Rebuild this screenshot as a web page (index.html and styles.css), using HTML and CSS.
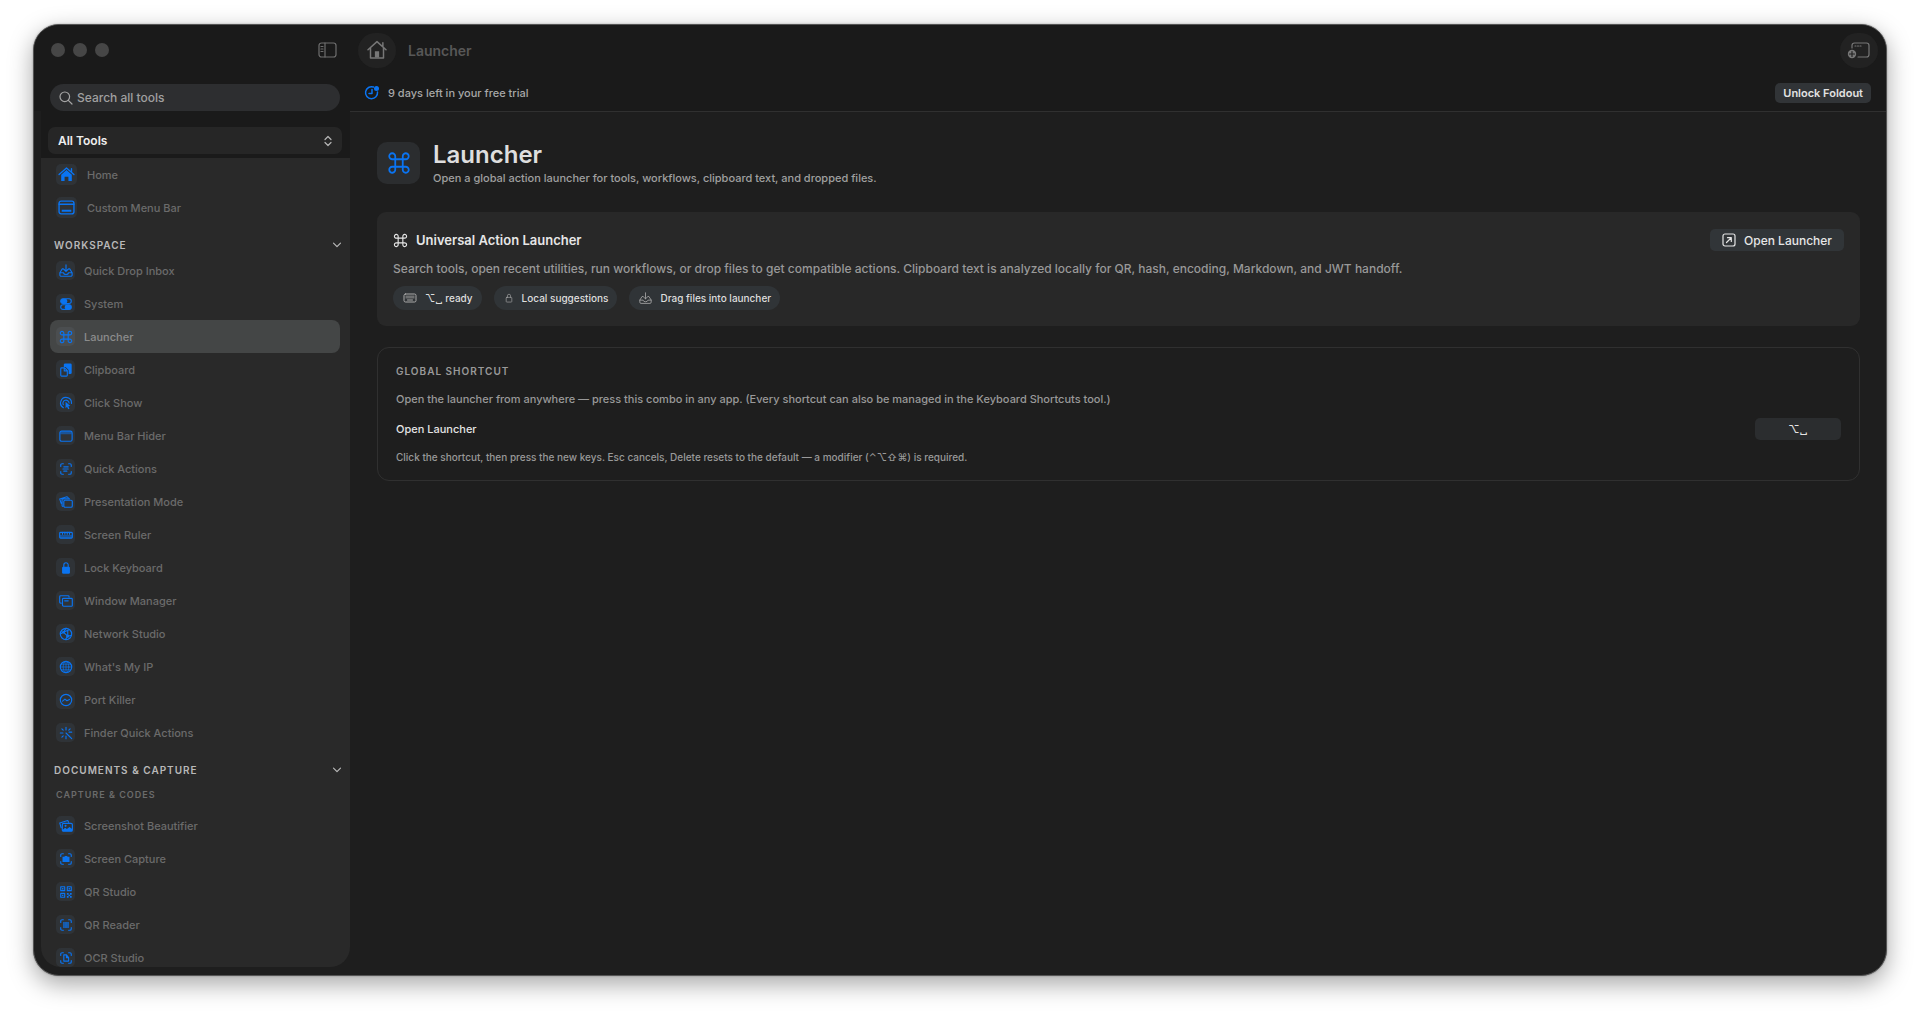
FILE: index.html
```html
<!DOCTYPE html>
<html lang="en">
<head>
    <meta charset="UTF-8">
    <meta name="viewport" content="width=device-width, initial-scale=1.0">
    <title>Launcher</title>
    <link rel="stylesheet" href="styles.css">
</head>
<body>

<!-- icon sprite -->
<svg class="sprite" aria-hidden="true">
    <symbol id="command" viewBox="0 0 16 16"><path d="M5.5 5.5h5v5h-5zM5.5 5.5H3.7a2 2 0 1 1 1.8-2zM10.5 5.5V3.7a2 2 0 1 1 2 1.8zM10.5 10.5h1.8a2 2 0 1 1-1.8 2zM5.5 10.5v1.8a2 2 0 1 1-2-1.8z"/></symbol>
    <symbol id="house-fill" viewBox="0 0 16 16"><path d="M1 8l7-6.2L15 8M12.7 2.5v3"/><path class="solid" d="M3 8.2l5-4.4 5 4.4V14H9.8v-4H6.2v4H3z"/></symbol>
    <symbol id="house" viewBox="0 0 16 16"><path d="M.8 7.8L8 1.3l7.2 6.5M2.8 6.5v7.8h10.4V6.5M12.7 2.2v3"/><path class="solid" d="M6.3 9h3.4v5H6.3z"/></symbol>
    <symbol id="menubar" viewBox="0 0 16 16"><rect x="1" y="2" width="14" height="12" rx="2"/><path d="M1 5h14"/><path class="solid" d="M3.5 10h9v2h-9z"/></symbol>
    <symbol id="tray" viewBox="0 0 16 16"><path d="M5 5.5H3.8L1 10v2.500A1.500 1.500 0 0 0 2.500 14h11A1.500 1.500 0 0 0 15 12.500V10l-2.800-4.500H11M1 10h4q.5 2 3 2t3-2h4M8 1v7.500M5.500 6L8 8.500 10.500 6"/></symbol>
    <symbol id="switches" viewBox="0 0 16 16"><rect x="2" y="2" width="12" height="5.400" rx="2.500"/><rect x="2" y="8.800" width="12" height="5.400" rx="2.500"/><rect class="solid" x="2" y="2" width="7.500" height="5.400" rx="2.500"/><rect class="solid" x="6.500" y="8.800" width="7.500" height="5.400" rx="2.500"/></symbol>
    <symbol id="clipboard" viewBox="0 0 16 16"><path class="solid" d="M6.500.5h6.500q1.500 0 1.500 1.500v9q0 1.500-1.500 1.500h-2V8L7.500 4.500h-2v-3z"/><path d="M3 5.500h3.500l3 3.200V14q0 1-1 1H3q-1 0-1-1V6.500q0-1 1-1zM6 5.500V9h3.500"/></symbol>
    <symbol id="click" viewBox="0 0 16 16"><path d="M5 13.300A6.200 6.200 0 1 1 14.200 8.500M5 10A3.500 3.500 0 1 1 11.500 8"/><path class="solid" d="M7.500 6.500l5.500 5-2.300.2 1.300 2.800-1.500.7-1.300-2.800-1.700 1.600z"/></symbol>
    <symbol id="window" viewBox="0 0 16 16"><rect x="1" y="2.500" width="14" height="11.500" rx="2"/><path class="faded" d="M1.500 3h13v3h-13z"/></symbol>
    <symbol id="scan-text" viewBox="0 0 16 16"><path d="M2 5V3.500Q2 2 3.500 2H5M11 2h1.500Q14 2 14 3.500V5M14 11v1.500q0 1.500-1.500 1.500H11M5 14H3.500Q2 14 2 12.500V11M5.500 5.500h5M4.500 8h6M5.500 10.500h3.500"/></symbol>
    <symbol id="stack" viewBox="0 0 16 16"><path d="M2.500 9.500L.8 4.500 9 2l1.500 1M4.500 13q-1 0-1-1V4.500H12"/><rect x="5.500" y="6" width="9.700" height="8" rx="1.500"/></symbol>
    <symbol id="ruler" viewBox="0 0 16 16"><path class="faded" d="M1 8h14v3.500H1z"/><rect x=".8" y="5" width="14.400" height="6.500" rx="1"/><path d="M4 5v2M6.700 5v2M9.400 5v2M12 5v2"/></symbol>
    <symbol id="lock-fill" viewBox="0 0 16 16"><rect class="solid" x="3.500" y="6.500" width="9" height="8" rx="1.500"/><path d="M5.500 7V4.500a2.500 2.500 0 0 1 5 0V7"/></symbol>
    <symbol id="lock" viewBox="0 0 16 16"><rect x="3.500" y="7" width="9" height="7.500" rx="1"/><path d="M5.500 7V4.500a2.500 2.500 0 0 1 5 0V7"/></symbol>
    <symbol id="windows" viewBox="0 0 16 16"><path d="M2.500 10.500H1.800q-1 0-1-1V3q0-1 1-1h8.700q1 0 1 1v.3M4 12.500V6q0-1 1-1h9.200q1 0 1 1v7q0 1-1 1H5.500q-1.500 0-1.500-1.500"/><path d="M6.500 7.800h4"/></symbol>
    <symbol id="network" viewBox="0 0 16 16"><circle cx="8" cy="8" r="6.500"/><path d="M8 1.500L5 6l-3.500 2M5 6l5 4.500 4-1M10 10.500L7.500 14M5 6l6-2.500M10 10.500V4"/><circle class="solid" cx="5" cy="6" r="1.500"/><circle class="solid" cx="10" cy="10.500" r="1.700"/></symbol>
    <symbol id="globe" viewBox="0 0 16 16"><circle cx="8" cy="8" r="6.500"/><g class="thin"><ellipse cx="8" cy="8" rx="3.200" ry="6.500"/><path d="M8 1.500v13M1.500 8h13M2.500 4.800h11M2.500 11.200h11"/></g></symbol>
    <symbol id="port" viewBox="0 0 16 16"><circle cx="8" cy="8" r="6.500"/><path d="M4 9.300L6.800 7l2.200 1.800L12 7.300"/></symbol>
    <symbol id="rays" viewBox="0 0 16 16"><path d="M8 1.500v3M8 11.500v3M1.500 8h3M11.500 7h3M3.300 3.300l1.500 1.500M12.700 3.300l-1.500 1.500M3.300 12.700l1.500-1.500M8 8l6.500 6.500"/></symbol>
    <symbol id="photos" viewBox="0 0 16 16"><path d="M2.500 10L.8 4.500 10 1.800l1 2"/><rect x="3.800" y="5" width="11.500" height="9" rx="1.500"/><path class="solid" d="M4 12.500l3-2.500 2 1.500 3-2.500 3 2.500V14H4z"/><circle class="solid" cx="7.500" cy="7.800" r="1.200"/></symbol>
    <symbol id="scan-camera" viewBox="0 0 16 16"><path d="M2 5V3.500Q2 2 3.500 2H5M11 2h1.500Q14 2 14 3.500V5M14 11v1.500q0 1.500-1.500 1.500H11M5 14H3.500Q2 14 2 12.500V11"/><path class="solid" d="M4 5.500h2l1-1h2l1 1h2v6H4z"/></symbol>
    <symbol id="qr" viewBox="0 0 16 16"><path d="M2 2h4.500v4.500H2zM9.500 2H14v4.500H9.500zM2 9.500h4.500V14H2z"/><path class="solid" d="M3.500 3.500H5V5H3.500zM11 3.500h1.500V5H11zM3.500 11H5v1.500H3.500zM9 9h2v2H9zM12.500 9h2v2h-2zM10.800 11h2v1.700h-2zM9 12.700h2v2H9zM12.500 12.700h2v2h-2z"/></symbol>
    <symbol id="scan-qr" viewBox="0 0 16 16"><path d="M2 5V3.500Q2 2 3.500 2H5M11 2h1.500Q14 2 14 3.500V5M14 11v1.500q0 1.500-1.500 1.500H11M5 14H3.500Q2 14 2 12.500V11"/><path class="faded" d="M5 4.500h6v7H5z"/><path class="thin" d="M5.500 5v6M8 5v6M10.500 5v6"/></symbol>
    <symbol id="scan-doc" viewBox="0 0 16 16"><path d="M2 5V3.500Q2 2 3.500 2H5M11 2h1.500Q14 2 14 3.500V5M14 11v1.500q0 1.500-1.500 1.500H11M5 14H3.500Q2 14 2 12.500V11M5.500 4.500h3l2.500 3v4H5.500zM8.500 4.500v3H11"/></symbol>
    <symbol id="chevron" viewBox="0 0 10 10"><path d="M1.500 3.200L5 6.700l3.500-3.500"/></symbol>
</svg>

<div class="window">
    <aside class="sidebar">
        <div class="sidebar-top">
            <div class="titlebar">
                <div class="lights">
                    <button type="button" aria-label="Close"></button>
                    <button type="button" aria-label="Minimize"></button>
                    <button type="button" aria-label="Zoom"></button>
                </div>
                <button type="button" class="toggle" aria-label="Toggle sidebar">
                    <svg width="20" height="16" viewBox="0 0 20 16"><rect x="1" y="1" width="17" height="14" rx="2.500"/><path d="M7 1v14M3 4.500h2M3 7h2M3 9.500h2"/></svg>
                </button>
            </div>
            <label class="search">
                <svg width="14" height="14" viewBox="0 0 14 14"><circle cx="5.800" cy="5.800" r="4.800"/><path d="M9.300 9.300L13 13"/></svg>
                <input type="search" placeholder="Search all tools" aria-label="Search all tools">
            </label>
        </div>

        <div class="panel">
            <div class="filter">
                <select aria-label="Tool filter">
                    <option>All Tools</option>
                </select>
                <svg width="10" height="12" viewBox="0 0 10 12"><path d="M2 4.500l3-3 3 3M2 7.500l3 3 3-3"/></svg>
            </div>
            <nav class="tools">
                <a class="tool pinned" href="#"><span class="badge"><svg><use href="#house-fill"/></svg></span>Home</a>
                <a class="tool pinned" href="#"><span class="badge"><svg><use href="#menubar"/></svg></span>Custom Menu Bar</a>

                <button type="button" class="section">WORKSPACE<svg><use href="#chevron"/></svg></button>
                <a class="tool" href="#"><span class="badge"><svg><use href="#tray"/></svg></span>Quick Drop Inbox</a>
                <a class="tool" href="#"><span class="badge"><svg><use href="#switches"/></svg></span>System</a>
                <a class="tool active" href="#"><span class="badge"><svg><use href="#command"/></svg></span>Launcher</a>
                <a class="tool" href="#"><span class="badge"><svg><use href="#clipboard"/></svg></span>Clipboard</a>
                <a class="tool" href="#"><span class="badge"><svg><use href="#click"/></svg></span>Click Show</a>
                <a class="tool" href="#"><span class="badge"><svg><use href="#window"/></svg></span>Menu Bar Hider</a>
                <a class="tool" href="#"><span class="badge"><svg><use href="#scan-text"/></svg></span>Quick Actions</a>
                <a class="tool" href="#"><span class="badge"><svg><use href="#stack"/></svg></span>Presentation Mode</a>
                <a class="tool" href="#"><span class="badge"><svg><use href="#ruler"/></svg></span>Screen Ruler</a>
                <a class="tool" href="#"><span class="badge"><svg><use href="#lock-fill"/></svg></span>Lock Keyboard</a>
                <a class="tool" href="#"><span class="badge"><svg><use href="#windows"/></svg></span>Window Manager</a>
                <a class="tool" href="#"><span class="badge"><svg><use href="#network"/></svg></span>Network Studio</a>
                <a class="tool" href="#"><span class="badge"><svg><use href="#globe"/></svg></span>What's My IP</a>
                <a class="tool" href="#"><span class="badge"><svg><use href="#port"/></svg></span>Port Killer</a>
                <a class="tool" href="#"><span class="badge"><svg><use href="#rays"/></svg></span>Finder Quick Actions</a>

                <button type="button" class="section">DOCUMENTS &amp; CAPTURE<svg><use href="#chevron"/></svg></button>
                <h3>CAPTURE &amp; CODES</h3>
                <a class="tool" href="#"><span class="badge"><svg><use href="#photos"/></svg></span>Screenshot Beautifier</a>
                <a class="tool" href="#"><span class="badge"><svg><use href="#scan-camera"/></svg></span>Screen Capture</a>
                <a class="tool" href="#"><span class="badge"><svg><use href="#qr"/></svg></span>QR Studio</a>
                <a class="tool" href="#"><span class="badge"><svg><use href="#scan-qr"/></svg></span>QR Reader</a>
                <a class="tool" href="#"><span class="badge"><svg><use href="#scan-doc"/></svg></span>OCR Studio</a>
            </nav>
        </div>
    </aside>

    <main class="main">
        <header class="header">
            <div class="toolbar">
                <button type="button" class="round" aria-label="Home"><svg width="20" height="20"><use href="#house"/></svg></button>
                <span class="crumb">Launcher</span>
                <button type="button" class="round new-window" aria-label="New window">
                    <svg width="24" height="20" viewBox="0 0 24 20"><path d="M5 8V5.500Q5 3 7.500 3h12Q22 3 22 5.500v9q0 2.500-2.500 2.500H11M8 6h1M10.500 6h1M13 6h1"/><circle class="solid" cx="5" cy="14" r="4.200"/><path class="cut" d="M5 11.500v5M2.500 14h5"/></svg>
                </button>
            </div>
            <div class="trial">
                <svg width="16" height="16" viewBox="0 0 16 16"><path d="M9.500 2A6 6 0 1 0 13.500 7M8 4.500V8.500H5"/><circle class="solid" cx="12.500" cy="3.500" r="2.500"/></svg>
                <span>9 days left in your free trial</span>
                <button type="button">Unlock Foldout</button>
            </div>
        </header>

        <div class="content">
            <div class="intro">
                <div class="tile"><svg width="24" height="24"><use href="#command"/></svg></div>
                <div>
                    <h1>Launcher</h1>
                    <p>Open a global action launcher for tools, workflows, clipboard text, and dropped files.</p>
                </div>
            </div>

            <section class="card">
                <div class="card-head">
                    <svg width="15" height="15"><use href="#command"/></svg>
                    <h2>Universal Action Launcher</h2>
                    <button type="button" class="open">
                        <svg width="14" height="14" viewBox="0 0 14 14"><rect x="1" y="1" width="12" height="12" rx="2"/><path d="M4.500 9.500l4.500-4.500M5.500 4.700h3.800v3.800"/></svg>
                        Open Launcher
                    </button>
                </div>
                <p>Search tools, open recent utilities, run workflows, or drop files to get compatible actions. Clipboard text is analyzed locally for QR, hash, encoding, Markdown, and JWT handoff.</p>
                <div class="chips">
                    <span class="chip"><svg width="14" height="14" viewBox="0 0 14 14"><rect x="1" y="3" width="12" height="8" rx="1.500"/><path d="M4.500 9h5"/><path class="faded" d="M2.500 4.500h9v3h-9z"/></svg>⌥␣ ready</span>
                    <span class="chip"><svg width="10" height="12"><use href="#lock"/></svg>Local suggestions</span>
                    <span class="chip"><svg width="13" height="13"><use href="#tray"/></svg>Drag files into launcher</span>
                </div>
            </section>

            <section class="shortcut">
                <h2>GLOBAL SHORTCUT</h2>
                <p>Open the launcher from anywhere — press this combo in any app. (Every shortcut can also be managed in the Keyboard Shortcuts tool.)</p>
                <div class="shortcut-row">
                    <label for="shortcutKey">Open Launcher</label>
                    <button type="button" id="shortcutKey">⌥␣</button>
                </div>
                <small>Click the shortcut, then press the new keys. Esc cancels, Delete resets to the default — a modifier (⌃⌥⇧⌘) is required.</small>
            </section>
        </div>
    </main>
</div>

</body>
</html>
```
FILE: styles.css
```css
* {
    box-sizing: border-box;
}

body {
    margin: 0;
    padding: 24px 33px 40px;
    height: 100vh;
    background-color: #fff;
    font-family: Inter, "Liberation Sans", "DejaVu Sans", sans-serif;
    font-size: 11px;
    font-weight: 500;
    color: #dedede;
    overflow: hidden;
}

h1, h2, h3, p {
    margin: 0;
}

button, input, select {
    font: inherit;
    color: inherit;
    border: none;
    padding: 0;
    background: none;
}

svg {
    flex: none;
    fill: none;
    stroke: currentColor;
    stroke-width: 1.2;
    stroke-linecap: round;
    stroke-linejoin: round;
}

.solid {
    fill: currentColor;
    stroke: none;
}

.faded {
    fill: currentColor;
    stroke: none;
    opacity: 0.5;
}

.thin {
    stroke-width: 0.8;
}

.sprite {
    position: absolute;
    width: 0;
    height: 0;
}

.window {
    display: flex;
    height: 100%;
    border: 1px solid #555;
    border-radius: 26px;
    background-color: #1e1e1e;
    box-shadow: 0 8px 24px rgba(0, 0, 0, 0.35), 0 0 2px rgba(0, 0, 0, 0.3);
    overflow: hidden;
}

/* sidebar */
.sidebar {
    display: flex;
    flex-direction: column;
    flex: none;
    width: 316px;
    padding-bottom: 8px;
}

.sidebar-top {
    height: 86px;
    padding: 0 10px 0 16px;
    background-color: #1a1a1a;
}

.titlebar {
    display: flex;
    align-items: center;
    justify-content: space-between;
    height: 50px;
    margin-bottom: 9px;
    padding: 0 2px 0 1px;
}

.lights {
    display: flex;
    gap: 8px;
}

.lights button {
    width: 14px;
    height: 14px;
    border-radius: 50%;
    background-color: #464646;
}

.toggle {
    display: flex;
    color: #6e6e6e;
}

.search {
    display: flex;
    align-items: center;
    gap: 4px;
    height: 27px;
    padding: 0 9px;
    border-radius: 14px;
    background-color: #2d2e30;
    color: #a5a5a5;
    font-size: 12px;
}

.search input {
    flex: 1;
    outline: none;
}

.search input::placeholder {
    color: #a0a0a0;
}

.panel {
    flex: 1;
    display: flex;
    flex-direction: column;
    min-height: 0;
    margin-left: 7px;
    border-radius: 0 0 20px 20px;
    background-color: #292929;
    overflow: hidden;
}

.filter {
    position: relative;
    padding: 16px 8px 4px 7px;
    background-color: #1a1a1a;
}

.filter select {
    display: block;
    width: 100%;
    height: 27px;
    padding: 0 10px;
    border-radius: 7px;
    background-color: #262626;
    color: #eee;
    font-size: 12px;
    font-weight: 600;
    appearance: none;
}

.filter svg {
    position: absolute;
    right: 17px;
    top: 24px;
    color: #b5b5b5;
    pointer-events: none;
}

.tools {
    flex: 1;
    min-height: 0;
    overflow: hidden;
}

.tool {
    display: flex;
    align-items: center;
    gap: 9px;
    height: 33px;
    margin: 0 10px 0 9px;
    padding-left: 6px;
    border-radius: 8px;
    color: #6b6b6b;
    text-decoration: none;
}

.tool.active {
    background-color: #444646;
    color: #8c8c8c;
}

.badge {
    display: flex;
    align-items: center;
    justify-content: center;
    width: 19px;
    height: 19px;
    border-radius: 5px;
    background-color: #2f3337;
    color: #0a74f2;
}

.badge svg {
    width: 14px;
    height: 14px;
    stroke-width: 1.3;
}

.active .badge {
    background-color: #4b4e50;
}

.pinned {
    gap: 10px;
}

.pinned .badge {
    width: 21px;
    height: 21px;
}

.pinned svg {
    width: 17px;
    height: 17px;
}

.section {
    display: flex;
    align-items: center;
    justify-content: space-between;
    width: 100%;
    height: 18px;
    margin-top: 12px;
    padding: 0 8px 0 13px;
    color: #b8b8b8;
    font-size: 10px;
    font-weight: 600;
    letter-spacing: 1px;
}

.section svg {
    width: 10px;
    height: 10px;
}

.tools h3 {
    padding: 2px 0 0 15px;
    color: #6b6b6b;
    font-size: 9px;
    font-weight: 600;
    letter-spacing: 1px;
    line-height: 28px;
}

/* main area */
.main {
    flex: 1;
    min-width: 0;
}

.header {
    height: 87px;
    border-bottom: 1px solid #303030;
    background-color: #1a1a1a;
}

.toolbar {
    display: flex;
    align-items: center;
    height: 50px;
    padding: 0 8px;
}

.round {
    display: flex;
    align-items: center;
    justify-content: center;
    width: 38px;
    height: 35px;
    border-radius: 18px;
    background-color: #222;
    color: #777;
}

.crumb {
    margin-left: 12px;
    color: #575757;
    font-size: 14px;
    font-weight: 600;
}

.new-window {
    margin-left: auto;
}

.cut {
    stroke: #222;
}

.trial {
    display: flex;
    align-items: center;
    gap: 8px;
    height: 36px;
    padding: 0 15px 0 14px;
    color: #a8a8a8;
}

.trial svg {
    color: #0a74f2;
    stroke-width: 1.5;
}

.trial button {
    margin-left: auto;
    height: 20px;
    padding: 0 8px;
    border-radius: 5px;
    background-color: #313437;
    color: #e2e2e2;
    font-weight: 600;
}

.content {
    padding: 30px 26px 0 27px;
}

.intro {
    display: flex;
    gap: 13px;
    margin-bottom: 23px;
}

.tile {
    display: flex;
    align-items: center;
    justify-content: center;
    width: 43px;
    height: 42px;
    border-radius: 10px;
    background-color: #2b2d2f;
    color: #0a74f2;
}

.intro h1 {
    font-size: 24px;
    font-weight: 600;
    line-height: 25px;
}

.intro p {
    color: #a0a0a0;
    line-height: 22px;
}

.card {
    margin-bottom: 21px;
    padding: 17px 16px 16px;
    border-radius: 9px;
    background-color: #282828;
}

.card-head {
    display: flex;
    align-items: center;
    gap: 8px;
    height: 22px;
    color: #e6e6e6;
}

.card h2 {
    font-size: 13px;
    font-weight: 600;
}

.open {
    display: flex;
    align-items: center;
    gap: 8px;
    height: 22px;
    margin-left: auto;
    padding: 0 12px;
    border-radius: 5px;
    background-color: #313538;
    font-size: 12px;
}

.card p {
    margin: 8px 0 7px;
    color: #999;
    font-size: 12px;
    line-height: 20px;
}

.chips {
    display: flex;
    gap: 12px;
}

.chip {
    display: flex;
    align-items: center;
    gap: 8px;
    height: 24px;
    padding: 0 9px 0 10px;
    border-radius: 12px;
    background-color: #303437;
    font-size: 10px;
}

.chip svg {
    color: #aaa;
    stroke-width: 1;
}

.shortcut {
    padding: 15px 18px;
    border: 1px solid #303030;
    border-radius: 12px;
    color: #999;
}

.shortcut h2 {
    font-size: 10px;
    font-weight: 600;
    letter-spacing: 1px;
    line-height: 16px;
}

.shortcut p {
    margin: 10px 0 9px;
    line-height: 20px;
}

.shortcut-row {
    display: flex;
    align-items: center;
    justify-content: space-between;
    color: #e4e4e4;
}

.shortcut-row button {
    width: 86px;
    height: 22px;
    border-radius: 5px;
    background-color: #2b2d2f;
}

.shortcut small {
    display: block;
    margin-top: 9px;
    font-size: 10px;
    line-height: 16px;
}
```
